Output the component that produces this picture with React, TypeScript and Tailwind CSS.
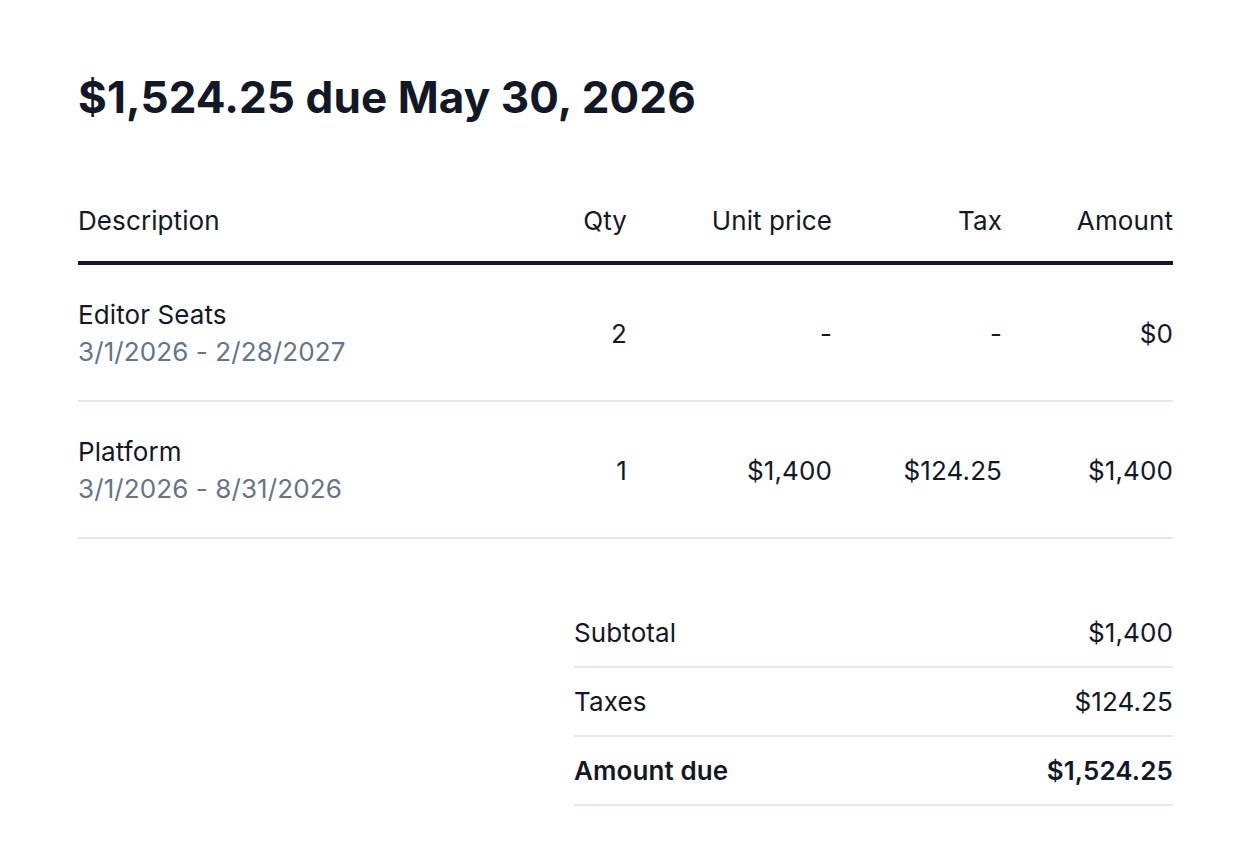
import React from "react";

type LineItem = {
  name: string;
  period: string;
  qty: string;
  unitPrice: string;
  tax: string;
  amount: string;
};

const items: LineItem[] = [
  { name: "Editor Seats", period: "3/1/2026 - 2/28/2027", qty: "2", unitPrice: "-", tax: "-", amount: "$0" },
  { name: "Platform", period: "3/1/2026 - 8/31/2026", qty: "1", unitPrice: "$1,400", tax: "$124.25", amount: "$1,400" },
];

const cols = "grid grid-cols-[1fr_120px_205px_170px_171px] items-center";

const SummaryRow = ({ label, value, bold }: { label: string; value: string; bold?: boolean }) => (
  <div className={`flex items-center justify-between border-b-2 border-[#e2e8f0] py-[15px] ${bold ? "font-semibold" : ""}`}>
    <span>{label}</span>
    <span>{value}</span>
  </div>
);

export default function App() {
  return (
    <div
      className="min-h-screen bg-white pl-[78px] pr-[75px] pt-[72px] text-[26px] leading-[37px] tracking-[0.1px] text-[#111827]"
      style={{ fontFamily: "Inter, 'Noto Sans', sans-serif" }}
    >
      <h1 className="text-[44px] font-bold leading-[50px]">$1,524.25 due May 30, 2026</h1>

      <div className="mt-[80px]">
        {/* header */}
        <div className={`${cols} border-b-4 border-[#111827] pb-[22px]`}>
          <div>Description</div>
          <div className="text-right">Qty</div>
          <div className="text-right">Unit price</div>
          <div className="text-right">Tax</div>
          <div className="text-right">Amount</div>
        </div>

        {/* rows */}
        {items.map((item) => (
          <div key={item.name} className={`${cols} border-b-2 border-[#e2e8f0] pt-[31px] pb-[30px]`}>
            <div className="flex flex-col">
              <span>{item.name}</span>
              <span className="text-[#64748b]">{item.period}</span>
            </div>
            <div className="text-right">{item.qty}</div>
            <div className="text-right">{item.unitPrice}</div>
            <div className="text-right">{item.tax}</div>
            <div className="text-right">{item.amount}</div>
          </div>
        ))}

        {/* totals */}
        <div className="mt-[60px] ml-auto w-[599px]">
          <SummaryRow label="Subtotal" value="$1,400" />
          <SummaryRow label="Taxes" value="$124.25" />
          <SummaryRow label="Amount due" value="$1,524.25" bold />
        </div>
      </div>
    </div>
  );
}
